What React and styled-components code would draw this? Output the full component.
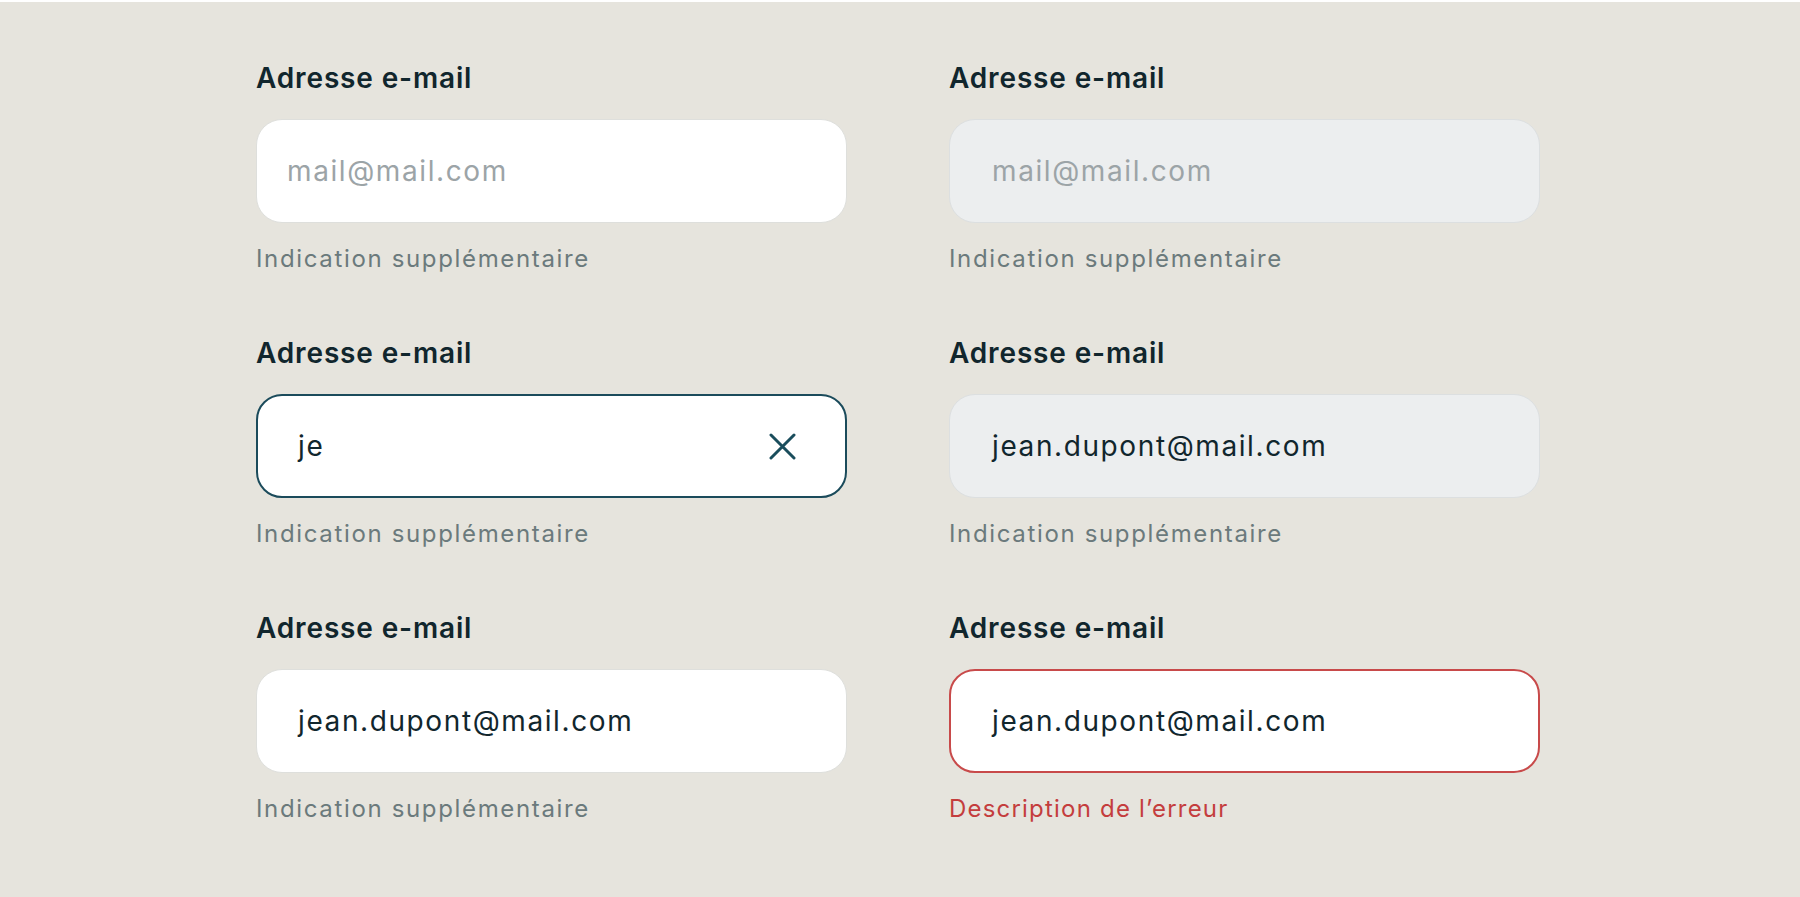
import React from "react";
import styled, { createGlobalStyle, css } from "styled-components";

const GlobalStyle = createGlobalStyle`
  html, body { margin: 0; padding: 0; background: #ffffff; }
  body { font-family: "Inter", "Liberation Sans", sans-serif; }
  * { box-sizing: border-box; }
`;

const Page = styled.main`
  margin-top: 2px;
  height: 895px;
  background: #e6e4dd;
  display: flex;
  justify-content: flex-start;
  padding: 59px 0 0 256px;
`;

const Grid = styled.div`
  display: grid;
  grid-template-columns: 591px 591px;
  column-gap: 102px;
  row-gap: 62px;
  align-content: start;
`;

const Field = styled.div`
  display: flex;
  flex-direction: column;
`;

const Label = styled.label`
  font-size: 28px;
  line-height: 34px;
  font-weight: 600;
  letter-spacing: 0.85px;
  color: #11262d;
  margin-bottom: 24px;
`;

const variants = {
  default: css`
    background: #ffffff;
    border: 1px solid #dedfdc;
  `,
  disabled: css`
    background: #eceeef;
    border: 1px solid #dcdfe0;
  `,
  focus: css`
    background: #ffffff;
    border: 2px solid #1b4b5b;
  `,
  error: css`
    background: #ffffff;
    border: 2px solid #c84a4a;
  `,
};

const Box = styled.div`
  height: 104px;
  border-radius: 26px;
  display: flex;
  align-items: center;
  padding-left: ${(p) => p.$pad}px;
  padding-right: 49px;
  ${(p) => variants[p.$variant]}
`;

const Value = styled.span`
  flex: 1;
  font-size: 28px;
  line-height: 34px;
  letter-spacing: 1.6px;
  color: ${(p) => (p.$placeholder ? "#9ca4a7" : "#11262d")};
  white-space: nowrap;
`;

const ClearButton = styled.button`
  border: 0;
  background: none;
  padding: 0;
  display: flex;
  cursor: pointer;
  color: #1a4d5c;
`;

const Helper = styled.p`
  margin: 21px 0 0;
  font-size: 24px;
  line-height: 30px;
  letter-spacing: ${(p) => (p.$error ? "1.2px" : "1.65px")};
  color: ${(p) => (p.$error ? "#c43d3d" : "#6b7a7c")};
`;

const CloseIcon = () => (
  <svg width="27" height="27" viewBox="0 0 27 27" fill="none">
    <path
      d="M2 2 L25 25 M25 2 L2 25"
      stroke="currentColor"
      strokeWidth="3"
      strokeLinecap="round"
    />
  </svg>
);

const fields = [
  { variant: "default", value: "mail@mail.com", placeholder: true, pad: 30, helper: "Indication supplémentaire" },
  { variant: "disabled", value: "mail@mail.com", placeholder: true, pad: 42, helper: "Indication supplémentaire" },
  { variant: "focus", value: "je", pad: 40, clear: true, helper: "Indication supplémentaire" },
  { variant: "disabled", value: "jean.dupont@mail.com", pad: 42, helper: "Indication supplémentaire" },
  { variant: "default", value: "jean.dupont@mail.com", pad: 41, helper: "Indication supplémentaire" },
  { variant: "error", value: "jean.dupont@mail.com", pad: 41, helper: "Description de l’erreur", error: true },
];

export default function App() {
  return (
    <>
      <GlobalStyle />
      <Page>
        <Grid>
          {fields.map((f, i) => (
            <Field key={i}>
              <Label>Adresse e-mail</Label>
              <Box $variant={f.variant} $pad={f.pad}>
                <Value $placeholder={f.placeholder}>{f.value}</Value>
                {f.clear && (
                  <ClearButton aria-label="Effacer">
                    <CloseIcon />
                  </ClearButton>
                )}
              </Box>
              <Helper $error={f.error}>{f.helper}</Helper>
            </Field>
          ))}
        </Grid>
      </Page>
    </>
  );
}
